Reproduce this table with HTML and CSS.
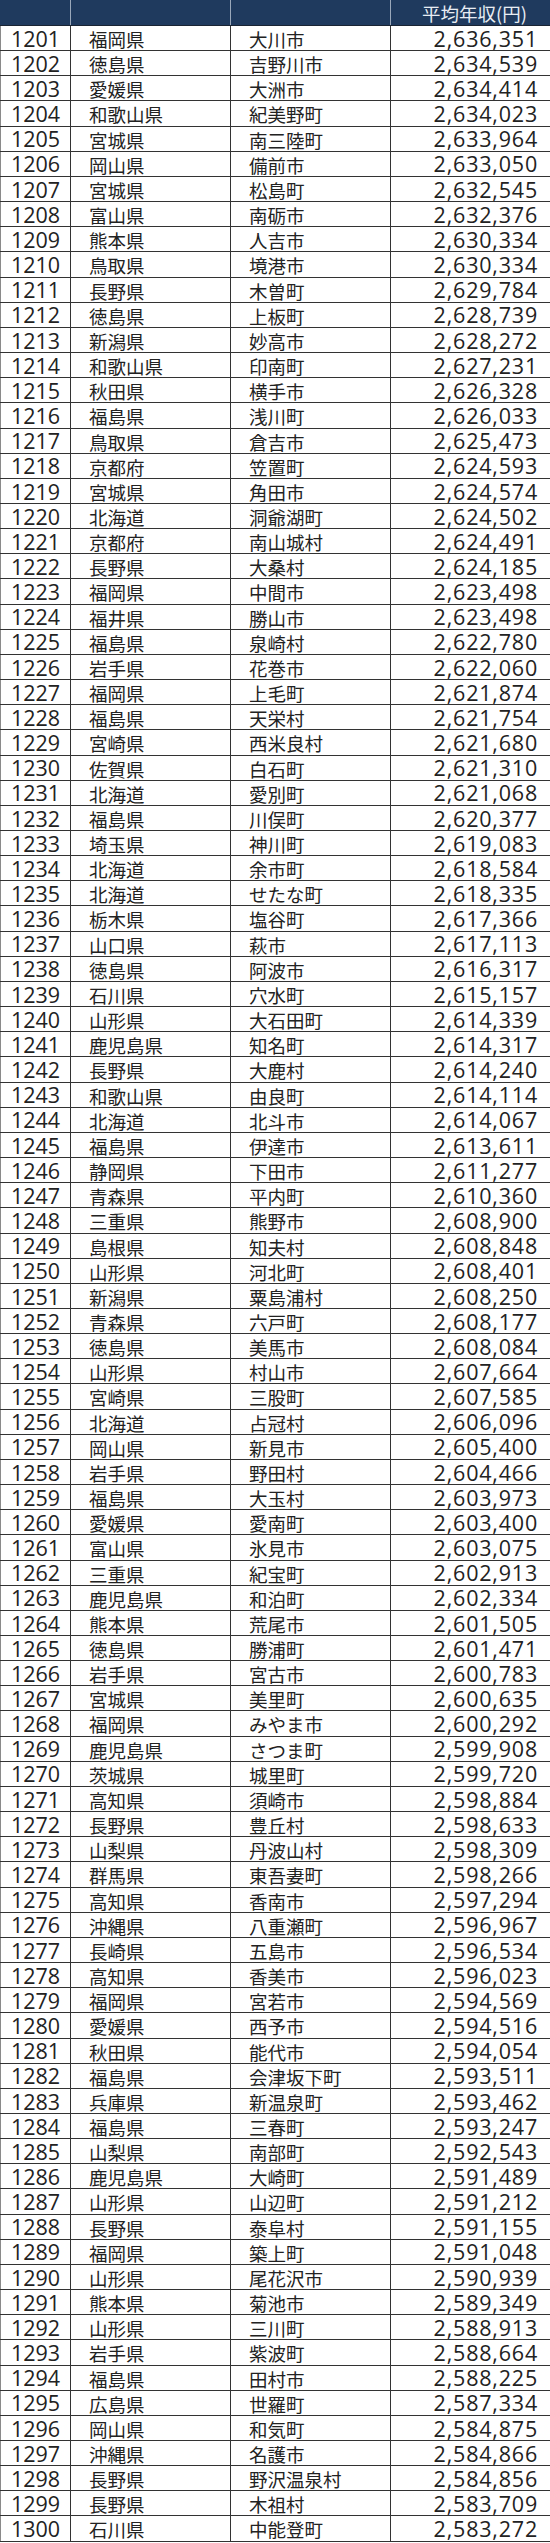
FILE: index.html
```html
<!DOCTYPE html>
<html lang="ja">
<head>
<meta charset="utf-8">
<title>平均年収ランキング 1201-1300</title>
<link rel="stylesheet" href="styles.css">
</head>
<body>
<div class="sheet">
<div class="row head"><div class="c num"></div><div class="c pref"></div><div class="c city"></div><div class="c val">平均年収(円)</div></div>
<div class="row"><div class="c num">1201</div><div class="c pref">福岡県</div><div class="c city">大川市</div><div class="c val">2,636,351</div></div>
<div class="row"><div class="c num">1202</div><div class="c pref">徳島県</div><div class="c city">吉野川市</div><div class="c val">2,634,539</div></div>
<div class="row"><div class="c num">1203</div><div class="c pref">愛媛県</div><div class="c city">大洲市</div><div class="c val">2,634,414</div></div>
<div class="row"><div class="c num">1204</div><div class="c pref">和歌山県</div><div class="c city">紀美野町</div><div class="c val">2,634,023</div></div>
<div class="row"><div class="c num">1205</div><div class="c pref">宮城県</div><div class="c city">南三陸町</div><div class="c val">2,633,964</div></div>
<div class="row"><div class="c num">1206</div><div class="c pref">岡山県</div><div class="c city">備前市</div><div class="c val">2,633,050</div></div>
<div class="row"><div class="c num">1207</div><div class="c pref">宮城県</div><div class="c city">松島町</div><div class="c val">2,632,545</div></div>
<div class="row"><div class="c num">1208</div><div class="c pref">富山県</div><div class="c city">南砺市</div><div class="c val">2,632,376</div></div>
<div class="row"><div class="c num">1209</div><div class="c pref">熊本県</div><div class="c city">人吉市</div><div class="c val">2,630,334</div></div>
<div class="row"><div class="c num">1210</div><div class="c pref">鳥取県</div><div class="c city">境港市</div><div class="c val">2,630,334</div></div>
<div class="row"><div class="c num">1211</div><div class="c pref">長野県</div><div class="c city">木曽町</div><div class="c val">2,629,784</div></div>
<div class="row"><div class="c num">1212</div><div class="c pref">徳島県</div><div class="c city">上板町</div><div class="c val">2,628,739</div></div>
<div class="row"><div class="c num">1213</div><div class="c pref">新潟県</div><div class="c city">妙高市</div><div class="c val">2,628,272</div></div>
<div class="row"><div class="c num">1214</div><div class="c pref">和歌山県</div><div class="c city">印南町</div><div class="c val">2,627,231</div></div>
<div class="row"><div class="c num">1215</div><div class="c pref">秋田県</div><div class="c city">横手市</div><div class="c val">2,626,328</div></div>
<div class="row"><div class="c num">1216</div><div class="c pref">福島県</div><div class="c city">浅川町</div><div class="c val">2,626,033</div></div>
<div class="row"><div class="c num">1217</div><div class="c pref">鳥取県</div><div class="c city">倉吉市</div><div class="c val">2,625,473</div></div>
<div class="row"><div class="c num">1218</div><div class="c pref">京都府</div><div class="c city">笠置町</div><div class="c val">2,624,593</div></div>
<div class="row"><div class="c num">1219</div><div class="c pref">宮城県</div><div class="c city">角田市</div><div class="c val">2,624,574</div></div>
<div class="row"><div class="c num">1220</div><div class="c pref">北海道</div><div class="c city">洞爺湖町</div><div class="c val">2,624,502</div></div>
<div class="row"><div class="c num">1221</div><div class="c pref">京都府</div><div class="c city">南山城村</div><div class="c val">2,624,491</div></div>
<div class="row"><div class="c num">1222</div><div class="c pref">長野県</div><div class="c city">大桑村</div><div class="c val">2,624,185</div></div>
<div class="row"><div class="c num">1223</div><div class="c pref">福岡県</div><div class="c city">中間市</div><div class="c val">2,623,498</div></div>
<div class="row"><div class="c num">1224</div><div class="c pref">福井県</div><div class="c city">勝山市</div><div class="c val">2,623,498</div></div>
<div class="row"><div class="c num">1225</div><div class="c pref">福島県</div><div class="c city">泉崎村</div><div class="c val">2,622,780</div></div>
<div class="row"><div class="c num">1226</div><div class="c pref">岩手県</div><div class="c city">花巻市</div><div class="c val">2,622,060</div></div>
<div class="row"><div class="c num">1227</div><div class="c pref">福岡県</div><div class="c city">上毛町</div><div class="c val">2,621,874</div></div>
<div class="row"><div class="c num">1228</div><div class="c pref">福島県</div><div class="c city">天栄村</div><div class="c val">2,621,754</div></div>
<div class="row"><div class="c num">1229</div><div class="c pref">宮崎県</div><div class="c city">西米良村</div><div class="c val">2,621,680</div></div>
<div class="row"><div class="c num">1230</div><div class="c pref">佐賀県</div><div class="c city">白石町</div><div class="c val">2,621,310</div></div>
<div class="row"><div class="c num">1231</div><div class="c pref">北海道</div><div class="c city">愛別町</div><div class="c val">2,621,068</div></div>
<div class="row"><div class="c num">1232</div><div class="c pref">福島県</div><div class="c city">川俣町</div><div class="c val">2,620,377</div></div>
<div class="row"><div class="c num">1233</div><div class="c pref">埼玉県</div><div class="c city">神川町</div><div class="c val">2,619,083</div></div>
<div class="row"><div class="c num">1234</div><div class="c pref">北海道</div><div class="c city">余市町</div><div class="c val">2,618,584</div></div>
<div class="row"><div class="c num">1235</div><div class="c pref">北海道</div><div class="c city">せたな町</div><div class="c val">2,618,335</div></div>
<div class="row"><div class="c num">1236</div><div class="c pref">栃木県</div><div class="c city">塩谷町</div><div class="c val">2,617,366</div></div>
<div class="row"><div class="c num">1237</div><div class="c pref">山口県</div><div class="c city">萩市</div><div class="c val">2,617,113</div></div>
<div class="row"><div class="c num">1238</div><div class="c pref">徳島県</div><div class="c city">阿波市</div><div class="c val">2,616,317</div></div>
<div class="row"><div class="c num">1239</div><div class="c pref">石川県</div><div class="c city">穴水町</div><div class="c val">2,615,157</div></div>
<div class="row"><div class="c num">1240</div><div class="c pref">山形県</div><div class="c city">大石田町</div><div class="c val">2,614,339</div></div>
<div class="row"><div class="c num">1241</div><div class="c pref">鹿児島県</div><div class="c city">知名町</div><div class="c val">2,614,317</div></div>
<div class="row"><div class="c num">1242</div><div class="c pref">長野県</div><div class="c city">大鹿村</div><div class="c val">2,614,240</div></div>
<div class="row"><div class="c num">1243</div><div class="c pref">和歌山県</div><div class="c city">由良町</div><div class="c val">2,614,114</div></div>
<div class="row"><div class="c num">1244</div><div class="c pref">北海道</div><div class="c city">北斗市</div><div class="c val">2,614,067</div></div>
<div class="row"><div class="c num">1245</div><div class="c pref">福島県</div><div class="c city">伊達市</div><div class="c val">2,613,611</div></div>
<div class="row"><div class="c num">1246</div><div class="c pref">静岡県</div><div class="c city">下田市</div><div class="c val">2,611,277</div></div>
<div class="row"><div class="c num">1247</div><div class="c pref">青森県</div><div class="c city">平内町</div><div class="c val">2,610,360</div></div>
<div class="row"><div class="c num">1248</div><div class="c pref">三重県</div><div class="c city">熊野市</div><div class="c val">2,608,900</div></div>
<div class="row"><div class="c num">1249</div><div class="c pref">島根県</div><div class="c city">知夫村</div><div class="c val">2,608,848</div></div>
<div class="row"><div class="c num">1250</div><div class="c pref">山形県</div><div class="c city">河北町</div><div class="c val">2,608,401</div></div>
<div class="row"><div class="c num">1251</div><div class="c pref">新潟県</div><div class="c city">粟島浦村</div><div class="c val">2,608,250</div></div>
<div class="row"><div class="c num">1252</div><div class="c pref">青森県</div><div class="c city">六戸町</div><div class="c val">2,608,177</div></div>
<div class="row"><div class="c num">1253</div><div class="c pref">徳島県</div><div class="c city">美馬市</div><div class="c val">2,608,084</div></div>
<div class="row"><div class="c num">1254</div><div class="c pref">山形県</div><div class="c city">村山市</div><div class="c val">2,607,664</div></div>
<div class="row"><div class="c num">1255</div><div class="c pref">宮崎県</div><div class="c city">三股町</div><div class="c val">2,607,585</div></div>
<div class="row"><div class="c num">1256</div><div class="c pref">北海道</div><div class="c city">占冠村</div><div class="c val">2,606,096</div></div>
<div class="row"><div class="c num">1257</div><div class="c pref">岡山県</div><div class="c city">新見市</div><div class="c val">2,605,400</div></div>
<div class="row"><div class="c num">1258</div><div class="c pref">岩手県</div><div class="c city">野田村</div><div class="c val">2,604,466</div></div>
<div class="row"><div class="c num">1259</div><div class="c pref">福島県</div><div class="c city">大玉村</div><div class="c val">2,603,973</div></div>
<div class="row"><div class="c num">1260</div><div class="c pref">愛媛県</div><div class="c city">愛南町</div><div class="c val">2,603,400</div></div>
<div class="row"><div class="c num">1261</div><div class="c pref">富山県</div><div class="c city">氷見市</div><div class="c val">2,603,075</div></div>
<div class="row"><div class="c num">1262</div><div class="c pref">三重県</div><div class="c city">紀宝町</div><div class="c val">2,602,913</div></div>
<div class="row"><div class="c num">1263</div><div class="c pref">鹿児島県</div><div class="c city">和泊町</div><div class="c val">2,602,334</div></div>
<div class="row"><div class="c num">1264</div><div class="c pref">熊本県</div><div class="c city">荒尾市</div><div class="c val">2,601,505</div></div>
<div class="row"><div class="c num">1265</div><div class="c pref">徳島県</div><div class="c city">勝浦町</div><div class="c val">2,601,471</div></div>
<div class="row"><div class="c num">1266</div><div class="c pref">岩手県</div><div class="c city">宮古市</div><div class="c val">2,600,783</div></div>
<div class="row"><div class="c num">1267</div><div class="c pref">宮城県</div><div class="c city">美里町</div><div class="c val">2,600,635</div></div>
<div class="row"><div class="c num">1268</div><div class="c pref">福岡県</div><div class="c city">みやま市</div><div class="c val">2,600,292</div></div>
<div class="row"><div class="c num">1269</div><div class="c pref">鹿児島県</div><div class="c city">さつま町</div><div class="c val">2,599,908</div></div>
<div class="row"><div class="c num">1270</div><div class="c pref">茨城県</div><div class="c city">城里町</div><div class="c val">2,599,720</div></div>
<div class="row"><div class="c num">1271</div><div class="c pref">高知県</div><div class="c city">須崎市</div><div class="c val">2,598,884</div></div>
<div class="row"><div class="c num">1272</div><div class="c pref">長野県</div><div class="c city">豊丘村</div><div class="c val">2,598,633</div></div>
<div class="row"><div class="c num">1273</div><div class="c pref">山梨県</div><div class="c city">丹波山村</div><div class="c val">2,598,309</div></div>
<div class="row"><div class="c num">1274</div><div class="c pref">群馬県</div><div class="c city">東吾妻町</div><div class="c val">2,598,266</div></div>
<div class="row"><div class="c num">1275</div><div class="c pref">高知県</div><div class="c city">香南市</div><div class="c val">2,597,294</div></div>
<div class="row"><div class="c num">1276</div><div class="c pref">沖縄県</div><div class="c city">八重瀬町</div><div class="c val">2,596,967</div></div>
<div class="row"><div class="c num">1277</div><div class="c pref">長崎県</div><div class="c city">五島市</div><div class="c val">2,596,534</div></div>
<div class="row"><div class="c num">1278</div><div class="c pref">高知県</div><div class="c city">香美市</div><div class="c val">2,596,023</div></div>
<div class="row"><div class="c num">1279</div><div class="c pref">福岡県</div><div class="c city">宮若市</div><div class="c val">2,594,569</div></div>
<div class="row"><div class="c num">1280</div><div class="c pref">愛媛県</div><div class="c city">西予市</div><div class="c val">2,594,516</div></div>
<div class="row"><div class="c num">1281</div><div class="c pref">秋田県</div><div class="c city">能代市</div><div class="c val">2,594,054</div></div>
<div class="row"><div class="c num">1282</div><div class="c pref">福島県</div><div class="c city">会津坂下町</div><div class="c val">2,593,511</div></div>
<div class="row"><div class="c num">1283</div><div class="c pref">兵庫県</div><div class="c city">新温泉町</div><div class="c val">2,593,462</div></div>
<div class="row"><div class="c num">1284</div><div class="c pref">福島県</div><div class="c city">三春町</div><div class="c val">2,593,247</div></div>
<div class="row"><div class="c num">1285</div><div class="c pref">山梨県</div><div class="c city">南部町</div><div class="c val">2,592,543</div></div>
<div class="row"><div class="c num">1286</div><div class="c pref">鹿児島県</div><div class="c city">大崎町</div><div class="c val">2,591,489</div></div>
<div class="row"><div class="c num">1287</div><div class="c pref">山形県</div><div class="c city">山辺町</div><div class="c val">2,591,212</div></div>
<div class="row"><div class="c num">1288</div><div class="c pref">長野県</div><div class="c city">泰阜村</div><div class="c val">2,591,155</div></div>
<div class="row"><div class="c num">1289</div><div class="c pref">福岡県</div><div class="c city">築上町</div><div class="c val">2,591,048</div></div>
<div class="row"><div class="c num">1290</div><div class="c pref">山形県</div><div class="c city">尾花沢市</div><div class="c val">2,590,939</div></div>
<div class="row"><div class="c num">1291</div><div class="c pref">熊本県</div><div class="c city">菊池市</div><div class="c val">2,589,349</div></div>
<div class="row"><div class="c num">1292</div><div class="c pref">山形県</div><div class="c city">三川町</div><div class="c val">2,588,913</div></div>
<div class="row"><div class="c num">1293</div><div class="c pref">岩手県</div><div class="c city">紫波町</div><div class="c val">2,588,664</div></div>
<div class="row"><div class="c num">1294</div><div class="c pref">福島県</div><div class="c city">田村市</div><div class="c val">2,588,225</div></div>
<div class="row"><div class="c num">1295</div><div class="c pref">広島県</div><div class="c city">世羅町</div><div class="c val">2,587,334</div></div>
<div class="row"><div class="c num">1296</div><div class="c pref">岡山県</div><div class="c city">和気町</div><div class="c val">2,584,875</div></div>
<div class="row"><div class="c num">1297</div><div class="c pref">沖縄県</div><div class="c city">名護市</div><div class="c val">2,584,866</div></div>
<div class="row"><div class="c num">1298</div><div class="c pref">長野県</div><div class="c city">野沢温泉村</div><div class="c val">2,584,856</div></div>
<div class="row"><div class="c num">1299</div><div class="c pref">長野県</div><div class="c city">木祖村</div><div class="c val">2,583,709</div></div>
<div class="row"><div class="c num">1300</div><div class="c pref">石川県</div><div class="c city">中能登町</div><div class="c val">2,583,272</div></div>
</div>
</body>
</html>
```
FILE: styles.css
```css
html, body {
  margin: 0;
  padding: 0;
  background: #ffffff;
}

.sheet {
  width: 550px;
  color: #222222;
  font-family: "Noto Sans CJK JP", "Noto Sans", sans-serif;
}

.row {
  display: grid;
  grid-template-columns: 71px 160px 160px 159px;
  height: 25.17px;
  box-sizing: border-box;
  border-bottom: 1px solid #333333;
}

.c {
  box-sizing: border-box;
  border-right: 1px solid #333333;
  white-space: nowrap;
  height: 100%;
}

.c.val {
  border-right: none;
}

.num {
  border-left: 1px solid #8a8a8a;
  text-align: center;
  font-family: "Open Sans", "Noto Sans", sans-serif;
  font-size: 21.5px;
  line-height: 22px;
  padding-top: 1.7px;
}

.pref,
.city {
  font-size: 18.5px;
  line-height: 22px;
  padding-top: 2px;
  padding-left: 18px;
}

.val {
  text-align: right;
  padding-right: 12px;
  font-family: "Open Sans", "Noto Sans", sans-serif;
  font-size: 21.5px;
  letter-spacing: 0.8px;
  line-height: 22px;
  padding-top: 1.7px;
}

.row.head {
  height: 26px;
  background: #1f3a5e;
  border-bottom: 1px solid #1a2433;
}

.head .c {
  border-right: 1px solid #9aa8ba;
}

.head .c.val {
  border-right: none;
  color: #e8edf3;
  font-family: "Noto Sans CJK JP", "Noto Sans", sans-serif;
  font-size: 18.5px;
  letter-spacing: 0;
  line-height: 22px;
  padding-top: 2px;
  padding-right: 23px;
}

.head .num {
  border-left: 1px solid #1f3a5e;
}
```
